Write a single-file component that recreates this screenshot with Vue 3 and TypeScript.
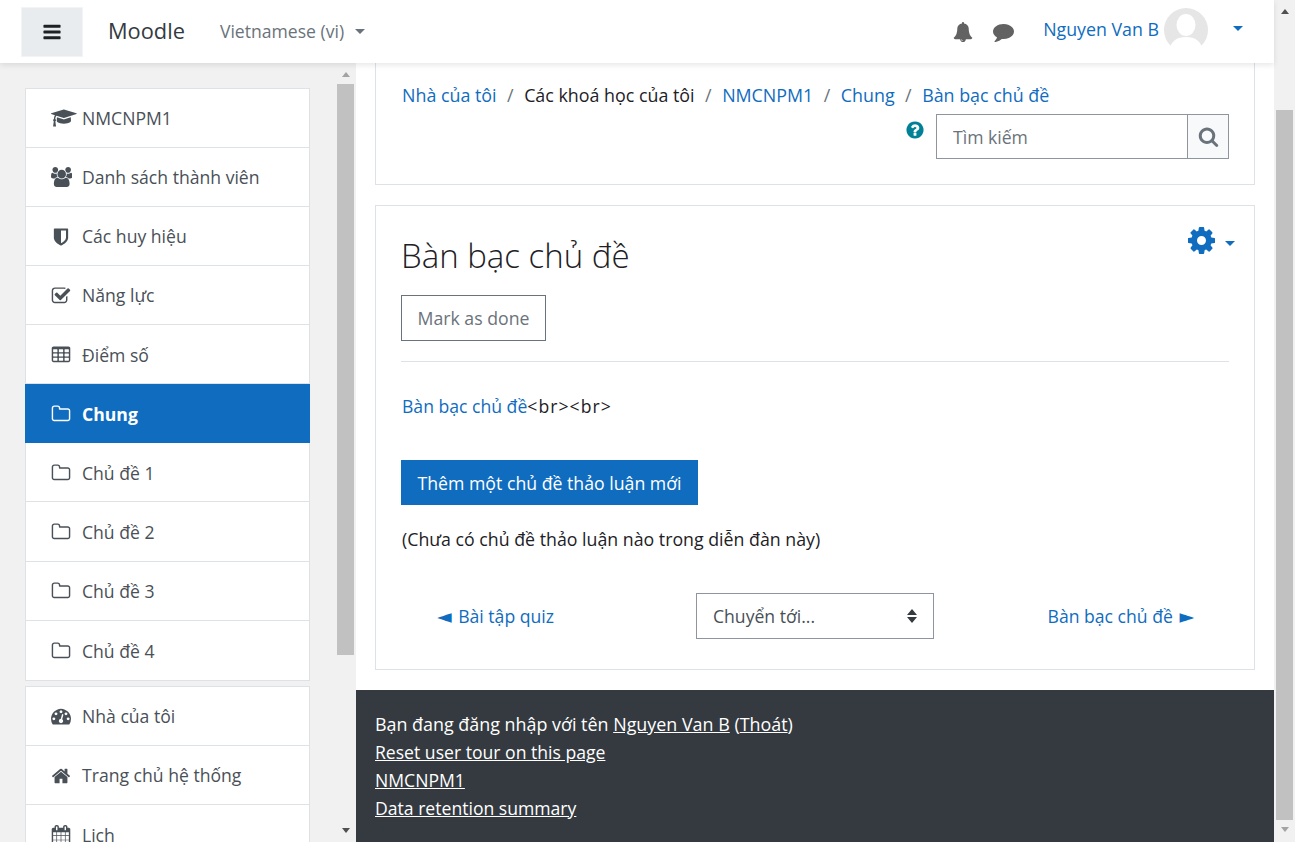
<script setup lang="ts">
const icons: Record<string, { box: string; d: string }> = {
  bars: { box: '0 0 1536 1792', d: 'M1536 1344v128q0 26-19 45t-45 19h-1408q-26 0-45-19t-19-45v-128q0-26 19-45t45-19h1408q26 0 45 19t19 45zm0-512v128q0 26-19 45t-45 19h-1408q-26 0-45-19t-19-45v-128q0-26 19-45t45-19h1408q26 0 45 19t19 45zm0-512v128q0 26-19 45t-45 19h-1408q-26 0-45-19t-19-45v-128q0-26 19-45t45-19h1408q26 0 45 19t19 45z' },
  search: { box: '0 0 1792 1792', d: 'M1216 832q0-185-131.500-316.500t-316.500-131.500-316.500 131.500-131.500 316.500 131.500 316.500 316.500 131.500 316.500-131.500 131.500-316.500zm512 832q0 52-38 90t-90 38q-54 0-90-38l-343-342q-179 124-399 124-143 0-273.500-55.500t-225-150-150-225-55.500-273.500 55.500-273.500 150-225 225-150 273.500-55.500 273.500 55.500 225 150 150 225 55.500 273.500q0 220-124 399l343 343q37 37 37 90z' },
  bell: { box: '0 0 1792 1792', d: 'M912 1696q0-16-16-16-59 0-101.500-42.500t-42.500-101.500q0-16-16-16t-16 16q0 73 51.500 124.500t124.500 51.500q16 0 16-16zm816-288q0 52-38 90t-90 38h-448q0 106-75 181t-181 75-181-75-75-181h-448q-52 0-90-38t-38-90q50-42 91-88t85-119.500 74.500-158.500 50-206 19.500-260q0-152 117-282.500t307-158.500q-8-19-8-39 0-40 28-68t68-28 68 28 28 68q0 20-8 39 190 28 307 158.500t117 282.500q0 139 19.500 260t50 206 74.500 158.500 85 119.500 91 88z' },
  comment: { box: '0 0 1792 1792', d: 'M1792 896q0 174-120 321.500t-326 233-450 85.500q-70 0-145-8-198 175-460 242-49 14-114 22-17 2-30.500-9t-17.500-29v-1q-3-4-.5-12t2-10 4.500-9.500l6-9 7-8.500 8-9q7-8 31-34.500t34.500-38 31-39.500 32.500-51 27-59 26-76q-157-89-247.500-220t-90.500-281q0-130 71-248.500t191-204.500 286-136.500 348-50.500q244 0 450 85.500t326 233 120 321.500z' },
  cog: { box: '128 128 1536 1536', d: 'M1152 896q0-106-75-181t-181-75-181 75-75 181 75 181 181 75 181-75 75-181zm512-109v222q0 12-8 23t-20 13l-185 28q-19 54-39 91 35 50 107 138 10 12 10 25t-9 23q-27 37-99 108t-94 71q-12 0-26-9l-138-108q-44 23-91 38-16 136-29 186-7 28-36 28h-222q-14 0-24.500-8.500t-11.500-21.500l-28-184q-49-16-90-37l-141 107q-10 9-25 9-14 0-25-11-126-114-165-168-7-10-7-23 0-12 8-23 15-21 51-66.500t54-70.500q-27-50-41-99l-183-27q-13-2-21-12.500t-8-23.500v-222q0-12 8-23t19-13l186-28q14-46 39-92-40-57-107-138-10-12-10-24 0-10 9-23 26-36 98.500-107.500t94.500-71.500q13 0 26 10l138 107q44-23 91-38 16-136 29-186 7-28 36-28h222q14 0 24.500 8.500t11.500 21.500l28 184q49 16 90 37l142-107q9-9 24-9 13 0 25 10 129 119 165 170 7 8 7 22 0 12-8 23-15 21-51 66.500t-54 70.500q26 50 41 98l183 28q13 2 21 12.500t8 23.500z' },
  home: { box: '0 0 1792 1792', d: 'M1472 992v480q0 26-19 45t-45 19h-384v-384h-256v384h-384q-26 0-45-19t-19-45v-480q0-1 .5-3t.5-3l575-474 575 474q1 2 1 6zm223-69l-62 74q-8 9-21 11h-3q-13 0-21-7l-692-577-692 577q-12 8-24 7-13-2-21-11l-62-74q-8-10-7-23.500t11-21.500l719-599q32-26 76-26t76 26l244 204v-195q0-14 9-23t23-9h192q14 0 23 9t9 23v408l219 182q10 8 11 21.500t-7 23.500z' },
  shield: { box: '0 0 1792 1792', d: 'M1344 960v-640h-448v1137q119-63 213-137 235-184 235-360zm192-768v768q0 86-33.500 170.500t-83 150-118 127.500-126.500 103-121 77.500-89.500 49.500-42.500 20q-12 6-26 6t-26-6q-16-7-42.500-20t-89.500-49.500-121-77.500-126.500-103-118-127.500-83-150-33.500-170.500v-768q0-26 19-45t45-19h1152q26 0 45 19t19 45z' },
  folder: { box: '0 0 1792 1792', d: 'M1600 1312v-704q0-40-28-68t-68-28h-704q-40 0-68-28t-28-68v-64q0-40-28-68t-68-28h-320q-40 0-68 28t-28 68v960q0 40 28 68t68 28h1216q40 0 68-28t28-68zm128-704v704q0 92-66 158t-158 66h-1216q-92 0-158-66t-66-158v-960q0-92 66-158t158-66h320q92 0 158 66t66 158v32h672q92 0 158 66t66 158z' },
  check: { box: '0 0 1792 1792', d: 'M1472 930v318q0 119-84.500 203.500t-203.500 84.500h-832q-119 0-203.500-84.500t-84.500-203.500v-832q0-119 84.500-203.500t203.500-84.500h832q63 0 117 25 15 7 18 23 3 17-9 29l-49 49q-10 10-23 10-3 0-9-2-23-6-45-6h-832q-66 0-113 47t-47 113v832q0 66 47 113t113 47h832q66 0 113-47t47-113v-254q0-13 9-22l64-64q10-10 23-10 6 0 12 3 20 8 20 29zm231-489l-814 814q-24 24-57 24t-57-24l-430-430q-24-24-24-57t24-57l110-110q24-24 57-24t57 24l263 263 647-647q24-24 57-24t57 24l110 110q24 24 24 57t-24 57z' },
  table: { box: '0 0 1792 1792', d: 'M576 1376v-192q0-14-9-23t-23-9h-320q-14 0-23 9t-9 23v192q0 14 9 23t23 9h320q14 0 23-9t9-23zm0-384v-192q0-14-9-23t-23-9h-320q-14 0-23 9t-9 23v192q0 14 9 23t23 9h320q14 0 23-9t9-23zm512 384v-192q0-14-9-23t-23-9h-320q-14 0-23 9t-9 23v192q0 14 9 23t23 9h320q14 0 23-9t9-23zm-512-768v-192q0-14-9-23t-23-9h-320q-14 0-23 9t-9 23v192q0 14 9 23t23 9h320q14 0 23-9t9-23zm512 384v-192q0-14-9-23t-23-9h-320q-14 0-23 9t-9 23v192q0 14 9 23t23 9h320q14 0 23-9t9-23zm512 384v-192q0-14-9-23t-23-9h-320q-14 0-23 9t-9 23v192q0 14 9 23t23 9h320q14 0 23-9t9-23zm-512-768v-192q0-14-9-23t-23-9h-320q-14 0-23 9t-9 23v192q0 14 9 23t23 9h320q14 0 23-9t9-23zm512 384v-192q0-14-9-23t-23-9h-320q-14 0-23 9t-9 23v192q0 14 9 23t23 9h320q14 0 23-9t9-23zm0-384v-192q0-14-9-23t-23-9h-320q-14 0-23 9t-9 23v192q0 14 9 23t23 9h320q14 0 23-9t9-23zm128-320v1088q0 66-47 113t-113 47h-1344q-66 0-113-47t-47-113v-1088q0-66 47-113t113-47h1344q66 0 113 47t47 113z' },
  question: { box: '0 0 1792 1792', d: 'M1024 1376v-192q0-14-9-23t-23-9h-192q-14 0-23 9t-9 23v192q0 14 9 23t23 9h192q14 0 23-9t9-23zm256-672q0-88-55.500-163t-138.500-116-170-41q-243 0-371 213-15 24 8 42l132 100q7 6 19 6 16 0 25-12 53-68 86-92 34-24 86-24 48 0 85.500 26t37.500 59q0 38-20 61t-68 45q-63 28-115.500 86.500t-52.500 125.500v36q0 14 9 23t23 9h192q14 0 23-9t9-23q0-19 21.500-49.500t54.500-49.500q32-18 49-28.500t46-35 44.500-48 28-60.500 12.500-81zm384 192q0 209-103 385.500t-279.500 279.500-385.500 103-385.500-103-279.500-279.500-103-385.500 103-385.500 279.500-279.500 385.500-103 385.500 103 279.500 279.500 103 385.500z' },
  cap: { box: '0 0 2304 1792', d: 'M1774 836l18 316q4 69-82 128t-235 93.500-323 34.500-323-34.500-235-93.500-82-128l18-316 574 181q22 7 48 7t48-7zm530-324q0 23-22 31l-1120 352q-4 1-10 1t-10-1l-652-206q-43 34-71 111.500t-34 178.500q63 36 63 109 0 69-58 107l58 433q2 14-8 25-9 11-24 11h-192q-15 0-24-11-10-11-8-25l58-433q-58-38-58-107 0-73 65-111 11-207 98-330l-333-104q-22-8-22-31t22-31l1120-352q4-1 10-1t10 1l1120 352q22 8 22 31z' },
  users: { box: '0 0 1920 1792', d: 'M593 896q-162 5-265 128h-134q-82 0-138-40.500t-56-118.500q0-353 124-353 6 0 43.500 21t97.500 42.500 119 21.500q67 0 133-23-5 37-5 66 0 139 81 256zm1071 637q0 120-73 189.500t-194 69.500h-874q-121 0-194-69.500t-73-189.500q0-53 3.500-103.500t14-109 26.500-108.500 43-97.500 62-81 85.500-53.500 111.500-20q10 0 43 21.500t73 48 107 48 135 21.500 135-21.500 107-48 73-48 43-21.500q61 0 111.500 20t85.500 53.500 62 81 43 97.500 26.500 108.500 14 109 3.500 103.500zm-1024-1277q0 106-75 181t-181 75-181-75-75-181 75-181 181-75 181 75 75 181zm704 384q0 159-112.500 271.500t-271.500 112.500-271.500-112.500-112.500-271.500 112.500-271.500 271.500-112.500 271.500 112.500 112.500 271.500zm576 225q0 78-56 118.500t-138 40.500h-134q-103-123-265-128 81-117 81-256 0-29-5-66 66 23 133 23 59 0 119-21.500t97.500-42.500 43.500-21q124 0 124 353zm-128-609q0 106-75 181t-181 75-181-75-75-181 75-181 181-75 181 75 75 181z' },
  gauge: { box: '0 0 1792 1792', d: 'M384 1152q0-53-37.500-90.500t-90.500-37.500-90.500 37.500-37.500 90.500 37.500 90.500 90.500 37.500 90.500-37.500 37.500-90.500zm192-448q0-53-37.500-90.500t-90.500-37.500-90.500 37.500-37.500 90.500 37.500 90.500 90.500 37.500 90.500-37.500 37.500-90.500zm428 481l101-382q6-26-7.500-48.500t-38.500-29.500-48 6.500-30 39.500l-101 382q-60 5-107 43.500t-63 98.500q-20 77 20 146t117 89 146-20 89-117q16-60-6-117t-72-91zm660-33q0-53-37.500-90.500t-90.500-37.500-90.500 37.500-37.500 90.500 37.500 90.500 90.500 37.500 90.500-37.500 37.500-90.500zm-640-640q0-53-37.500-90.500t-90.500-37.500-90.500 37.500-37.500 90.500 37.500 90.500 90.500 37.500 90.500-37.500 37.500-90.500zm448 192q0-53-37.500-90.500t-90.500-37.500-90.500 37.500-37.500 90.500 37.500 90.500 90.500 37.500 90.500-37.500 37.500-90.500zm320 448q0 261-141 483-19 29-54 29h-1402q-35 0-54-29-141-221-141-483 0-182 71-348t191-286 286-191 348-71 348 71 286 191 191 286 71 348z' },
  calendar: { box: '-64 0 1792 1792', d: 'M128 1664h288v-288h-288v288zm352 0h320v-288h-320v288zm-352-352h288v-320h-288v320zm352 0h320v-320h-320v320zm-352-384h288v-288h-288v288zm736 736h320v-288h-320v288zm-384-736h320v-288h-320v288zm768 736h288v-288h-288v288zm-384-352h320v-320h-320v320zm-352-864v-288q0-13-9.500-22.500t-22.500-9.500h-64q-13 0-22.500 9.500t-9.500 22.500v288q0 13 9.500 22.500t22.500 9.500h64q13 0 22.500-9.500t9.500-22.500zm736 864h288v-320h-288v320zm-384-384h320v-288h-320v288zm384 0h288v-288h-288v288zm32-480v-288q0-13-9.500-22.500t-22.500-9.500h-64q-13 0-22.500 9.500t-9.500 22.500v288q0 13 9.500 22.500t22.500 9.500h64q13 0 22.500-9.500t9.500-22.500zm384-64v1280q0 52-38 90t-90 38h-1408q-52 0-90-38t-38-90v-1280q0-52 38-90t90-38h128v-96q0-66 47-113t113-47h64q66 0 113 47t47 113v96h384v-96q0-66 47-113t113-47h64q66 0 113 47t47 113v96h128q52 0 90 38t38 90z' },
}

interface NavItem {
  label: string
  icon: string
  active?: boolean
}

const courseNav: NavItem[] = [
  { label: 'NMCNPM1', icon: 'cap' },
  { label: 'Danh sách thành viên', icon: 'users' },
  { label: 'Các huy hiệu', icon: 'shield' },
  { label: 'Năng lực', icon: 'check' },
  { label: 'Điểm số', icon: 'table' },
  { label: 'Chung', icon: 'folder', active: true },
  { label: 'Chủ đề 1', icon: 'folder' },
  { label: 'Chủ đề 2', icon: 'folder' },
  { label: 'Chủ đề 3', icon: 'folder' },
  { label: 'Chủ đề 4', icon: 'folder' },
]

const siteNav: NavItem[] = [
  { label: 'Nhà của tôi', icon: 'gauge' },
  { label: 'Trang chủ hệ thống', icon: 'home' },
  { label: 'Lịch', icon: 'calendar' },
]
</script>

<template>
  <div class="page">
    <div class="main-col">
      <header class="topbar">
        <button class="menu-btn">
          <svg class="bars" :viewBox="icons.bars.box"><path :d="icons.bars.d" /></svg>
        </button>
        <span class="brand">Moodle</span>
        <span class="lang">Vietnamese (vi)<i class="caret caret-gray" /></span>
        <span class="spacer" />
        <svg class="top-icon bell" :viewBox="icons.bell.box"><path :d="icons.bell.d" /></svg>
        <svg class="top-icon comment" :viewBox="icons.comment.box"><path :d="icons.comment.d" /></svg>
        <a class="username">Nguyen Van B</a>
        <svg class="avatar" viewBox="0 0 44 44">
          <circle cx="22" cy="22" r="22" fill="#e6e6e6" />
          <ellipse cx="22" cy="17" rx="9.500" ry="11" fill="#fff" />
          <path d="M5 44c1-11 8-15 17-15s16 4 17 15z" fill="#fff" />
        </svg>
        <i class="caret caret-blue user-caret" />
      </header>

      <div class="body-row">
        <aside class="sidebar">
          <div class="nav-col">
            <ul class="nav-list first">
              <li v-for="item in courseNav" :key="item.label" class="nav-item" :class="{ active: item.active }">
                <span class="nav-icon">
                  <svg :viewBox="icons[item.icon].box"><path :d="icons[item.icon].d" /></svg>
                </span>
                <span>{{ item.label }}</span>
              </li>
            </ul>
            <ul class="nav-list">
              <li v-for="item in siteNav" :key="item.label" class="nav-item">
                <span class="nav-icon">
                  <svg :viewBox="icons[item.icon].box"><path :d="icons[item.icon].d" /></svg>
                </span>
                <span>{{ item.label }}</span>
              </li>
            </ul>
          </div>
          <div class="side-scroll">
            <i class="arrow-up" />
            <div class="side-thumb" />
            <i class="arrow-down" />
          </div>
        </aside>

        <main class="content">
          <div class="content-inner">
            <section class="card head-card">
              <nav class="crumbs">
                <a>Nhà của tôi</a><span class="sep">/</span>
                <span>Các khoá học của tôi</span><span class="sep">/</span>
                <a>NMCNPM1</a><span class="sep">/</span>
                <a>Chung</a><span class="sep">/</span>
                <a>Bàn bạc chủ đề</a>
              </nav>
              <div class="search-row">
                <svg class="help" :viewBox="icons.question.box"><path :d="icons.question.d" /></svg>
                <div class="search">
                  <input class="search-input" placeholder="Tìm kiếm" />
                  <button class="search-btn">
                    <svg :viewBox="icons.search.box"><path :d="icons.search.d" /></svg>
                  </button>
                </div>
              </div>
            </section>

            <section class="card forum-card">
              <div class="title-row">
                <h1>Bàn bạc chủ đề</h1>
                <div class="gear">
                  <svg :viewBox="icons.cog.box"><path :d="icons.cog.d" /></svg>
                  <i class="caret caret-blue" />
                </div>
              </div>
              <button class="done-btn">Mark as done</button>
              <hr class="rule" />
              <p class="intro"><a>Bàn bạc chủ đề</a><span class="raw">&lt;br&gt;&lt;br&gt;</span></p>
              <button class="add-btn">Thêm một chủ đề thảo luận mới</button>
              <p class="empty">(Chưa có chủ đề thảo luận nào trong diễn đàn này)</p>
              <div class="activity-nav">
                <a class="prev"><span class="pointer left">◄</span> Bài tập quiz</a>
                <div class="jump">
                  <span>Chuyển tới...</span>
                  <svg viewBox="0 0 10 14"><path d="M5 0l5 6H0zM0 8h10l-5 6z" /></svg>
                </div>
                <a class="next">Bàn bạc chủ đề <span class="pointer right">►</span></a>
              </div>
            </section>
          </div>

          <footer class="footer">
            <div class="login-line">Bạn đang đăng nhập với tên <a>Nguyen Van B</a> (<a>Thoát</a>)</div>
            <div><a>Reset user tour on this page</a></div>
            <div><a>NMCNPM1</a></div>
            <div><a>Data retention summary</a></div>
          </footer>
        </main>
      </div>
    </div>

    <div class="page-scroll">
      <i class="arrow-up" />
      <div class="page-thumb" />
      <i class="arrow-down light" />
    </div>
  </div>
</template>

<style>
html,
body {
  margin: 0;
  height: 100%;
  overflow: hidden;
}
</style>

<style scoped>
* {
  box-sizing: border-box;
}
.page {
  display: flex;
  width: 1295px;
  height: 842px;
  overflow: hidden;
  background: #fff;
  color: #1d2125;
  font-family: "Open Sans", "Noto Sans", sans-serif;
  font-size: 17.6px;
  line-height: 1.5;
}
.main-col {
  flex: 1;
  min-width: 0;
  display: flex;
  flex-direction: column;
}
a {
  color: #0f6cbf;
}

/* top bar */
.topbar {
  position: relative;
  z-index: 2;
  flex: none;
  height: 63px;
  display: flex;
  align-items: center;
  padding-left: 21px;
  background: #fff;
  box-shadow: 0 2px 6px rgba(0, 0, 0, 0.1);
}
.menu-btn {
  width: 62px;
  height: 50px;
  border: 1px solid #f3f4f5;
  background: #e9ecef;
  display: flex;
  align-items: center;
  justify-content: center;
  padding: 0;
}
.bars {
  width: 18px;
  height: 20px;
  fill: #1d2125;
}
.brand {
  margin-left: 25px;
  font-size: 21.8px;
  color: #343a40;
}
.lang {
  margin-left: 35px;
  color: #6a737b;
  display: flex;
  align-items: center;
}
.caret {
  display: inline-block;
  width: 0;
  height: 0;
  border-left: 5.5px solid transparent;
  border-right: 5.5px solid transparent;
  border-top: 5.5px solid;
}
.caret-gray {
  color: #6a737b;
  margin-left: 11px;
}
.caret-blue {
  color: #0f6cbf;
}
.spacer {
  flex: 1;
}
.top-icon {
  fill: #626262;
}
.bell {
  width: 20px;
  height: 20px;
}
.comment {
  width: 21px;
  height: 21px;
  margin-left: 20px;
}
.username {
  margin-left: 29px;
  font-size: 17.8px;
  position: relative;
  top: -2px;
}
.avatar {
  width: 44px;
  height: 44px;
  margin-left: 5px;
  position: relative;
  top: -2px;
}
.user-caret {
  margin-left: 25px;
  margin-right: 31px;
  position: relative;
  top: -3px;
}

/* sidebar */
.body-row {
  flex: 1;
  min-height: 0;
  display: flex;
}
.sidebar {
  flex: none;
  width: 356px;
  display: flex;
  background: #f1f1f1;
  overflow: hidden;
  padding: 24.7px 2px 0 25px;
}
.nav-col {
  flex: none;
  width: 285px;
}
.nav-list {
  list-style: none;
  margin: 0 0 5px;
  padding: 0;
  background: #fff;
  border: 1px solid #dee2e6;
}
.nav-item {
  height: 59.12px;
  display: flex;
  align-items: center;
  padding-left: 25px;
  padding-top: 1.2px;
  color: #495057;
  border-bottom: 1px solid #dee2e6;
}
.nav-item:last-child {
  border-bottom: 0;
}
.nav-item.active {
  margin: 0 -1px;
  padding-left: 26px;
  background: #0f6cbf;
  color: #fff;
  font-weight: 700;
  border-bottom-color: #0f6cbf;
}
.nav-icon {
  flex: none;
  width: 31px;
  height: 20px;
  display: flex;
  align-items: center;
}
.nav-icon svg {
  flex: none;
  height: 20px;
  width: auto;
  fill: #495057;
}
.nav-item.active .nav-icon svg {
  fill: #fff;
}

/* scrollbars */
.side-scroll {
  margin-left: 27px;
  margin-top: -24.7px;
  width: 17px;
  flex: none;
  display: flex;
  flex-direction: column;
  align-items: center;
}
.side-thumb {
  width: 17px;
  height: 571px;
  background: #c1c1c1;
  margin-top: 7px;
}
.side-scroll .arrow-up {
  margin-top: 9px;
  border-bottom-color: #a3a3a3;
}
.side-scroll .arrow-down {
  margin-top: auto;
  margin-bottom: 9px;
}
.arrow-up,
.arrow-down {
  display: block;
  width: 0;
  height: 0;
  border-left: 4px solid transparent;
  border-right: 4px solid transparent;
}
.arrow-up {
  border-bottom: 5px solid #505050;
}
.arrow-down {
  border-top: 5px solid #505050;
}
.arrow-down.light {
  border-top-color: #a3a3a3;
}
.page-scroll {
  flex: none;
  width: 21px;
  background: #f1f1f1;
  display: flex;
  flex-direction: column;
  align-items: center;
}
.page-scroll .arrow-up {
  margin-top: 9px;
}
.page-thumb {
  width: 17px;
  height: 710px;
  margin-top: 96px;
  background: #c1c1c1;
}
.page-scroll .arrow-down {
  margin-top: 7px;
}

/* content */
.content {
  flex: 1;
  min-width: 0;
  display: flex;
  flex-direction: column;
}
.content-inner {
  flex: 1;
  padding: 0 19px;
}
.card {
  background: #fff;
  border: 1px solid #dee2e6;
}
.head-card {
  height: 122px;
  border-top: 0;
  padding: 19px 25px 0 26px;
}
.crumbs {
  height: 28px;
  white-space: nowrap;
  font-size: 17.85px;
}
.sep {
  color: #6a737b;
  margin: 0 10.5px;
}
.search-row {
  margin-top: 4px;
  display: flex;
  justify-content: flex-end;
  align-items: flex-start;
}
.help {
  width: 20px;
  height: 20px;
  margin: 6px 11px 0 0;
  fill: #008196;
}
.search {
  display: flex;
  height: 45px;
  width: 293px;
  border: 1px solid #8f959e;
}
.search-input {
  flex: 1;
  min-width: 0;
  border: 0;
  outline: 0;
  padding: 2px 16px 0;
  font: inherit;
  color: #495057;
}
.search-input::placeholder {
  color: #6a737b;
  opacity: 1;
}
.search-btn {
  width: 41px;
  border: 0;
  border-left: 1px solid #8f959e;
  background: #f8f9fa;
  display: flex;
  align-items: center;
  justify-content: center;
  padding: 0;
}
.search-btn svg {
  width: 21px;
  height: 21px;
  fill: #6a737b;
}
.forum-card {
  margin-top: 20px;
  height: 465px;
  padding: 0 25px;
}
.title-row {
  height: 89px;
  display: flex;
  align-items: flex-start;
  justify-content: space-between;
}
h1 {
  margin: 25px 0 0;
  font-size: 33px;
  font-weight: 300;
  line-height: 50px;
}
.gear {
  display: flex;
  align-items: center;
  margin: 21px -6px 0 0;
}
.gear svg {
  width: 27px;
  height: 27px;
  fill: #0f6cbf;
}
.gear .caret {
  margin-left: 10px;
  margin-top: 5px;
  border-left-width: 5px;
  border-right-width: 5px;
  border-top-width: 5px;
}
button {
  font-family: inherit;
}
.done-btn {
  display: block;
  width: 145px;
  height: 46px;
  padding: 0;
  border: 1px solid #6a737b;
  background: #fff;
  color: #6a737b;
  font-size: 17.7px;
}
.rule {
  margin: 20px 0 0;
  border: 0;
  border-top: 1px solid #dee2e6;
}
.intro {
  margin: 31px 0 0 1px;
  line-height: 26px;
}
.raw {
  letter-spacing: 1.05px;
}
.add-btn {
  display: block;
  margin-top: 41px;
  width: 297px;
  height: 45px;
  padding: 0;
  border: 0;
  background: #0f6cbf;
  color: #fff;
  font-size: 17.7px;
}
.empty {
  margin: 21px 0 0 1px;
  line-height: 26px;
  font-size: 17.75px;
}
.activity-nav {
  margin-top: 41px;
  display: grid;
  grid-template-columns: 1fr auto 1fr;
  align-items: center;
  padding: 0 35px;
}
.prev {
  margin-left: 1px;
}
.next {
  justify-self: end;
}
.pointer {
  font-family: "DejaVu Sans", sans-serif;
  font-size: 19px;
  line-height: 1;
}
.pointer.left {
  margin-right: 2px;
}
.pointer.right {
  margin-left: 2px;
}
.jump {
  width: 238px;
  height: 46px;
  border: 1px solid #8f959e;
  display: flex;
  align-items: center;
  justify-content: space-between;
  padding: 0 16px;
  color: #495057;
}
.jump svg {
  width: 10px;
  height: 14px;
  fill: #343a40;
}

/* footer */
.footer {
  flex: none;
  height: 152px;
  padding: 20px 19px 0;
  background: #343a40;
  color: #fff;
  line-height: 28px;
}
.login-line {
  font-size: 17.9px;
}
.footer a {
  color: #fff;
  text-decoration: underline;
}
</style>
